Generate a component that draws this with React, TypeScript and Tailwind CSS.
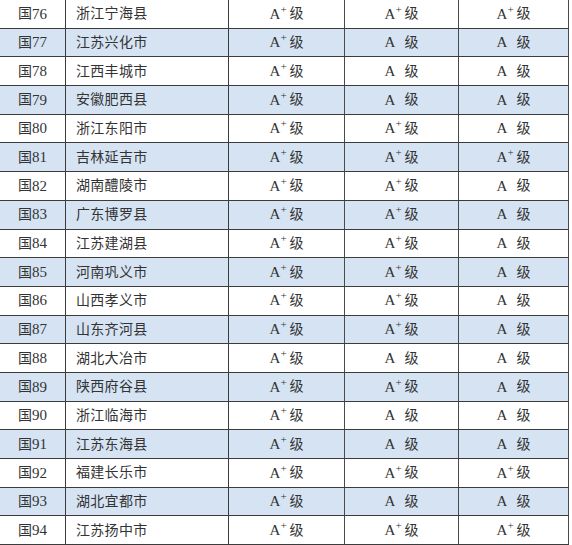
type Grade = 'A+' | 'A'

type Row = {
  no: number
  name: string
  grades: [Grade, Grade, Grade]
}

const rows: Row[] = [
  { no: 76, name: '浙江宁海县', grades: ['A+', 'A+', 'A+'] },
  { no: 77, name: '江苏兴化市', grades: ['A+', 'A', 'A'] },
  { no: 78, name: '江西丰城市', grades: ['A+', 'A', 'A'] },
  { no: 79, name: '安徽肥西县', grades: ['A+', 'A', 'A'] },
  { no: 80, name: '浙江东阳市', grades: ['A+', 'A+', 'A'] },
  { no: 81, name: '吉林延吉市', grades: ['A+', 'A+', 'A+'] },
  { no: 82, name: '湖南醴陵市', grades: ['A+', 'A+', 'A'] },
  { no: 83, name: '广东博罗县', grades: ['A+', 'A+', 'A'] },
  { no: 84, name: '江苏建湖县', grades: ['A+', 'A+', 'A'] },
  { no: 85, name: '河南巩义市', grades: ['A+', 'A+', 'A'] },
  { no: 86, name: '山西孝义市', grades: ['A+', 'A+', 'A'] },
  { no: 87, name: '山东齐河县', grades: ['A+', 'A+', 'A'] },
  { no: 88, name: '湖北大冶市', grades: ['A+', 'A', 'A'] },
  { no: 89, name: '陕西府谷县', grades: ['A+', 'A+', 'A'] },
  { no: 90, name: '浙江临海市', grades: ['A+', 'A', 'A'] },
  { no: 91, name: '江苏东海县', grades: ['A+', 'A', 'A'] },
  { no: 92, name: '福建长乐市', grades: ['A+', 'A+', 'A+'] },
  { no: 93, name: '湖北宜都市', grades: ['A+', 'A', 'A'] },
  { no: 94, name: '江苏扬中市', grades: ['A+', 'A+', 'A+'] },
]

function GradeCell({ grade }: { grade: Grade }) {
  return (
    <div className="flex items-center justify-center border-r-[1.5px] border-[#4a4a4a]">
      <span className="text-[15px]">A</span>
      <span className="relative -top-[5px] inline-block w-[7px] text-left text-[11px]">
        {grade === 'A+' ? '+' : ''}
      </span>
      <span className="ml-[2px]">级</span>
    </div>
  )
}

export default function App() {
  return (
    <div
      className="h-[545px] w-[572px] overflow-hidden bg-white text-[14px] text-[#333]"
      style={{ fontFamily: '"Liberation Serif", "Noto Sans CJK SC", serif' }}
    >
      <div className="w-[569px]">
        {rows.map((r, i) => (
          <div
            key={r.no}
            className={
              'grid h-[28.7px] grid-cols-[66px_163px_116px_114px_110px] border-b border-[#3c3c3c] ' +
              (i % 2 === 1 ? 'bg-[#d5e3f3]' : 'bg-white')
            }
          >
            <div className="flex items-center justify-center border-r-[1.5px] border-[#3c3c3c]">
              <span>国</span>
              <span className="text-[15px]">{r.no}</span>
            </div>
            <div className="flex items-center border-r-[1.5px] border-[#3c3c3c] pl-[10px] tracking-[0.3px]">
              {r.name}
            </div>
            {r.grades.map((g, j) => (
              <GradeCell key={j} grade={g} />
            ))}
          </div>
        ))}
      </div>
    </div>
  )
}
